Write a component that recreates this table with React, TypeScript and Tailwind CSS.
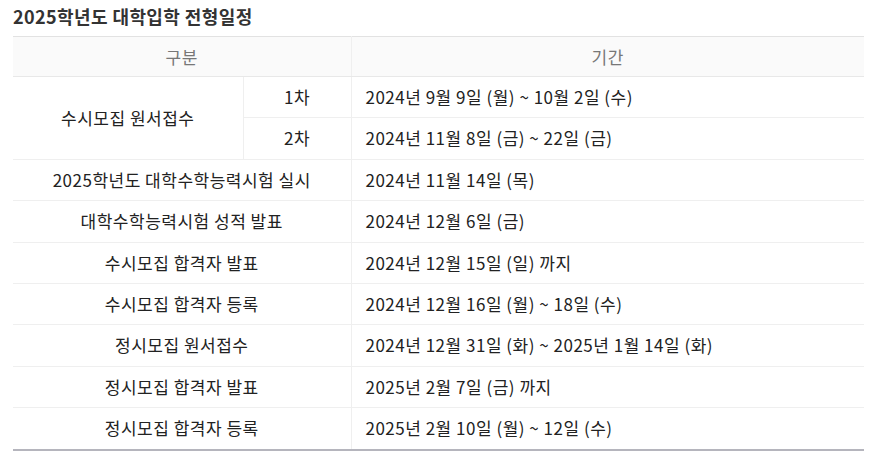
import React from 'react'

const rows: [string, string][] = [
    ["2025학년도 대학수학능력시험 실시", "2024년 11월 14일 (목)"],
    ["대학수학능력시험 성적 발표", "2024년 12월 6일 (금)"],
    ["수시모집 합격자 발표", "2024년 12월 15일 (일) 까지"],
    ["수시모집 합격자 등록", "2024년 12월 16일 (월) ~ 18일 (수)"],
    ["정시모집 원서접수", "2024년 12월 31일 (화) ~ 2025년 1월 14일 (화)"],
    ["정시모집 합격자 발표", "2025년 2월 7일 (금) 까지"],
    ["정시모집 합격자 등록", "2025년 2월 10일 (월) ~ 12일 (수)"],
]

const td = "border-b border-[#efefef] py-[10px] leading-[20.4px] align-middle"

export default function App() {
    return (
        <div className="bg-white w-[871px] h-[456px] px-[13px] pt-[5px] text-[#222] text-[17px] tracking-[0.5px]" style={{ fontFamily: '"Malgun Gothic", "Noto Sans CJK KR", "Noto Sans", sans-serif' }}>
            <h2 className="font-bold text-[18px] tracking-[0.4px] leading-[20px] text-[#333] h-[31px] pt-[1px]">2025학년도 대학입학 전형일정</h2>
            <table className="w-[851px] border-collapse table-fixed border-t border-t-[#e2e2e2] border-b-2 border-b-[#b5b5bd]">
                <colgroup>
                    <col className="w-[230px]" />
                    <col className="w-[108px]" />
                    <col />
                </colgroup>
                <thead>
                    <tr className="bg-[#fafafa] text-[#777]">
                        <th colSpan={2} className="font-normal h-[40px] border-b border-[#e8e8e8] border-r border-r-[#efefef]">구분</th>
                        <th className="font-normal h-[40px] border-b border-[#e8e8e8]">기간</th>
                    </tr>
                </thead>
                <tbody>
                    <tr>
                        <td rowSpan={2} className={td + " text-center border-r border-r-[#efefef]"}>수시모집 원서접수</td>
                        <td className={td + " text-center border-r border-r-[#efefef]"}>1차</td>
                        <td className={td + " pl-[14px]"}>2024년 9월 9일 (월) ~ 10월 2일 (수)</td>
                    </tr>
                    <tr>
                        <td className={td + " text-center border-r border-r-[#efefef]"}>2차</td>
                        <td className={td + " pl-[14px]"}>2024년 11월 8일 (금) ~ 22일 (금)</td>
                    </tr>
                    {rows.map(([a, b], i) => (
                        <tr key={i}>
                            <td colSpan={2} className={td + " text-center border-r border-r-[#efefef]" + (i === rows.length - 1 ? " border-b-0" : "")}>{a}</td>
                            <td className={td + " pl-[14px]" + (i === rows.length - 1 ? " border-b-0" : "")}>{b}</td>
                        </tr>
                    ))}
                </tbody>
            </table>
        </div>
    )
}
